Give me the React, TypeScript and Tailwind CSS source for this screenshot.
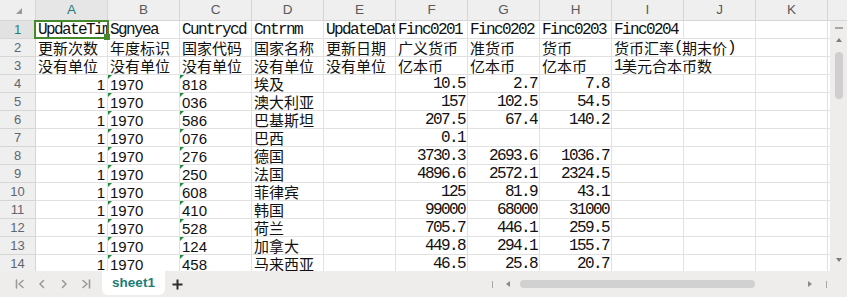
import React from 'react';

type Cell = { t: string; f?: 'm' | 's'; r?: boolean; tri?: boolean; span?: number };

const COLS = ['A', 'B', 'C', 'D', 'E', 'F', 'G', 'H', 'I', 'J', 'K', 'L'];

const mk = (arr: string[]): Cell[] => arr.map((t) => ({ t }));

const row1: Cell[] = mk(['UpdateTime', 'Sgnyea', 'Cuntrycd', 'Cntrnm', 'UpdateDate', 'Finc0201', 'Finc0202', 'Finc0203', 'Finc0204', '', '', '']);
const row2: Cell[] = [
  ...mk(['更新次数', '年度标识', '国家代码', '国家名称', '更新日期', '广义货币', '准货币', '货币']),
  { t: '货币汇率(期末价)', span: 2 },
  ...mk(['', '']),
];
const row3: Cell[] = [
  ...mk(['没有单位', '没有单位', '没有单位', '没有单位', '没有单位', '亿本币', '亿本币', '亿本币']),
  { t: '1美元合本币数', span: 2 },
  ...mk(['', '']),
];

const data: [string, string, string, string, string][] = [
  ['818', '埃及', '10.5', '2.7', '7.8'],
  ['036', '澳大利亚', '157', '102.5', '54.5'],
  ['586', '巴基斯坦', '207.5', '67.4', '140.2'],
  ['076', '巴西', '0.1', '', ''],
  ['276', '德国', '3730.3', '2693.6', '1036.7'],
  ['250', '法国', '4896.6', '2572.1', '2324.5'],
  ['608', '菲律宾', '125', '81.9', '43.1'],
  ['410', '韩国', '99000', '68000', '31000'],
  ['528', '荷兰', '705.7', '446.1', '259.5'],
  ['124', '加拿大', '449.8', '294.1', '155.7'],
  ['458', '马来西亚', '46.5', '25.8', '20.7'],
];

const dataRows: Cell[][] = data.map(([code, name, f, g, h]) => [
  { t: '1', f: 's', r: true },
  { t: '1970', f: 's', tri: true },
  { t: code, f: 's', tri: true },
  { t: name },
  { t: '' },
  { t: f, r: true },
  { t: g, r: true },
  { t: h, r: true },
  { t: '' },
  { t: '' },
  { t: '' },
  { t: '' },
]);

const allRows: Cell[][] = [row1, row2, row3, ...dataRows];

function Runs({ t }: { t: string }) {
  const parts = t.split(/([\x00-\x7f]+)/).filter((p) => p.length > 0);
  return (
    <>
      {parts.map((p, i) =>
        /^[\x00-\x7f]+$/.test(p) ? (
          <span
            key={i}
            className="relative top-[1px] font-['Liberation_Mono',monospace] text-[16px] leading-[17px] tracking-[-1.6px]"
          >
            {p}
          </span>
        ) : (
          <span key={i} className="font-['Noto_Sans_CJK_SC',sans-serif] text-[15px] leading-[17px]">
            {p}
          </span>
        )
      )}
    </>
  );
}

function DataCell({ c, first }: { c: Cell; first: boolean }) {
  return (
    <div
      className={`relative flex items-center whitespace-nowrap border-b border-r border-[#e1e1e1] bg-white leading-[17px] text-[#111] ${
        c.span === 2 ? 'col-span-2' : ''
      } ${c.r ? 'justify-end pr-[2px]' : 'pl-[2px]'} ${first ? '' : 'overflow-hidden'}`}
    >
      {c.tri && (
        <div className="absolute left-0 top-0 h-0 w-0 border-r-[4px] border-t-[4px] border-r-transparent border-t-[#1f8c3b]" />
      )}
      {first && (
        <>
          <div className="absolute left-0 top-0 flex h-full w-[71px] items-center overflow-hidden pl-[2px]">
            <Runs t={c.t} />
          </div>
          <div className="absolute left-[-2px] top-[-1px] z-10 h-[19px] w-[75px] border-2 border-[#46892d]" />
          <div className="absolute bottom-[-2px] right-[-3px] z-10 h-[6px] w-[6px] bg-[#46892d]" />
        </>
      )}
      {!first &&
        (c.f === 's' ? (
          <span className="relative top-[1px] font-['Liberation_Sans',sans-serif] text-[15px]">{c.t}</span>
        ) : (
          <Runs t={c.t} />
        ))}
    </div>
  );
}

function NavIcon({ d }: { d: string }) {
  return (
    <svg width="10" height="10" viewBox="0 0 10 10" className="shrink-0">
      <path d={d} fill="none" stroke="#9a9a9a" strokeWidth="1.6" strokeLinecap="round" strokeLinejoin="round" />
    </svg>
  );
}

export default function App() {
  return (
    <div className="flex h-[297px] w-[847px] flex-col overflow-hidden bg-white font-['Liberation_Sans',sans-serif]">
      <div className="flex h-[271px] overflow-hidden">
        <div className="w-[830px] overflow-hidden">
          <div className="grid w-max grid-cols-[36px_repeat(12,72px)] grid-rows-[21px] auto-rows-[18px]">
            <div className="flex items-center justify-center border-b border-r border-[#d6d6d6] bg-[#efefef]">
              <svg width="8" height="8" viewBox="0 0 8 8" className="ml-[3px] mt-[2px]">
                <path d="M7 1 L7 7 L1 7 Z" fill="#9a9a9a" />
              </svg>
            </div>
            {COLS.map((c, i) => (
              <div
                key={c}
                className={`flex items-center justify-center border-b border-r border-[#d6d6d6] text-[13.5px] ${
                  i === 0 ? 'bg-[#e6e6e6] text-[#1e7f78]' : 'bg-[#efefef] text-[#5a5a5a]'
                }`}
              >
                {c}
              </div>
            ))}
            {allRows.map((row, ri) => (
              <React.Fragment key={ri}>
                <div
                  className={`flex items-center justify-center border-b border-r border-[#d6d6d6] text-[13px] ${
                    ri === 0 ? 'bg-[#e2e2e2] text-[#1e7f78]' : 'bg-[#efefef] text-[#5f6670]'
                  }`}
                >
                  {ri + 1}
                </div>
                {row.map((c, ci) => (
                  <DataCell key={ci} c={c} first={ri === 0 && ci === 0} />
                ))}
              </React.Fragment>
            ))}
          </div>
        </div>
        <div className="flex w-[17px] flex-col">
          <div className="h-[21px] shrink-0 border-b border-[#d6d6d6] bg-[#efefef]" />
          <div className="flex flex-1 flex-col items-center bg-[#efedeb]">
            <div className="mt-[6px] h-[2px] w-[8px] bg-[#a6a6a6]" />
            <div className="mt-[9px] h-0 w-0 border-x-[3px] border-b-[4px] border-x-transparent border-b-[#7d7d7d]" />
            <div className="mt-[10px] h-[47px] w-[8px] rounded-full bg-[#cfcfcf]" />
            <div className="mb-[9px] mt-auto h-0 w-0 border-x-[3px] border-t-[4px] border-x-transparent border-t-[#7d7d7d]" />
          </div>
        </div>
      </div>
      <div className="flex h-[26px] items-center bg-[#efedeb]">
        <div className="ml-[15px] flex items-center gap-[12px]">
          <NavIcon d="M1.5 1 V9 M8 1.5 L4 5 L8 8.5" />
          <NavIcon d="M6.5 1.5 L3 5 L6.5 8.5" />
          <NavIcon d="M3.5 1.5 L7 5 L3.5 8.5" />
          <NavIcon d="M2 1.5 L6 5 L2 8.5 M8.5 1 V9" />
        </div>
        <div className="ml-[11px] flex h-[24px] w-[63px] items-center justify-center self-start rounded-b-[6px] bg-white text-[13.5px] font-bold text-[#1d7c76]">
          sheet1
        </div>
        <svg width="11" height="11" viewBox="0 0 11 11" className="ml-[7px]">
          <path d="M5.5 0.5 V10.5 M0.5 5.5 H10.5" stroke="#2e2e2e" strokeWidth="2" />
        </svg>
        <div className="flex-1" />
        <div className="mr-[20px] flex items-center">
          <div className="h-[7px] w-[1px] bg-[#a8a8a8]" />
          <div className="ml-[13px] h-0 w-0 border-y-[3px] border-r-[4px] border-y-transparent border-r-[#8a8a8a]" />
          <div className="ml-[10px] h-[8px] w-[235px] rounded-full bg-[#d1d1d1]" />
          <div className="ml-[53px] h-0 w-0 border-y-[3px] border-l-[4px] border-y-transparent border-l-[#8a8a8a]" />
          <div className="ml-[14px] h-[7px] w-[1px] bg-[#a8a8a8]" />
        </div>
      </div>
    </div>
  );
}
